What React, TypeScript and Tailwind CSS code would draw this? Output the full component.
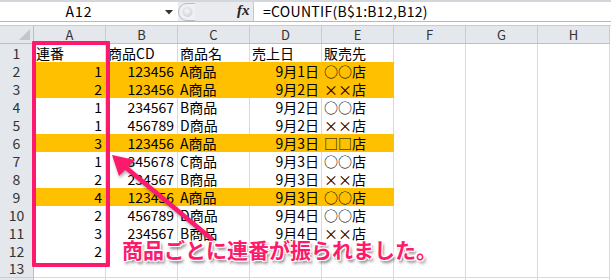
import React from "react";

type Row = { cells: string[]; hl: boolean; label: string };

const rows: Row[] = [
  { cells: ["連番", "商品CD", "商品名", "売上日", "販売先"], hl: false, label: "1" },
  { cells: ["1", "123456", "A商品", "9月1日", "○○店"], hl: true, label: "2" },
  { cells: ["2", "123456", "A商品", "9月2日", "××店"], hl: true, label: "3" },
  { cells: ["1", "234567", "B商品", "9月2日", "○○店"], hl: false, label: "4" },
  { cells: ["1", "456789", "D商品", "9月2日", "××店"], hl: false, label: "5" },
  { cells: ["3", "123456", "A商品", "9月3日", "□□店"], hl: true, label: "6" },
  { cells: ["1", "345678", "C商品", "9月3日", "○○店"], hl: false, label: "7" },
  { cells: ["2", "234567", "B商品", "9月3日", "××店"], hl: false, label: "8" },
  { cells: ["4", "123456", "A商品", "9月3日", "○○店"], hl: true, label: "9" },
  { cells: ["2", "456789", "D商品", "9月4日", "○○店"], hl: false, label: "10" },
  { cells: ["3", "234567", "B商品", "9月4日", "××店"], hl: false, label: "11" },
  { cells: ["2", "", "", "", ""], hl: false, label: "12" },
  { cells: ["", "", "", "", ""], hl: false, label: "13" },
  { cells: ["", "", "", "", ""], hl: false, label: "" },
];

const cols = ["A", "B", "C", "D", "E", "F", "G", "H"];

function cellAlign(rowIdx: number, colIdx: number): string {
  if (rowIdx === 0) return "justify-start pl-[2px]";
  if (colIdx === 0 || colIdx === 1) return "justify-end pr-[3px]";
  if (colIdx === 3) return "justify-end pr-[2px]";
  return "justify-start pl-[2px]";
}

export default function App() {
  return (
    <div className="relative w-[611px] h-[280px] overflow-hidden bg-white font-['Noto_Sans_CJK_JP',sans-serif] text-[14px] text-black">
      {/* Formula bar */}
      <div className="h-[26px] flex flex-col bg-white">
        <div className="h-[2px] bg-[#d3d6db]" />
        <div className="h-[19px] flex">
          <div className="relative w-[178px] bg-white flex items-center">
            <span className="w-[158px] text-center text-[14px] leading-[19px] tracking-[1px]">A12</span>
            <svg className="absolute left-[165px] top-[8px]" width="8" height="5" viewBox="0 0 8 5">
              <polygon points="0,0 8,0 4,4.5" fill="#333" />
            </svg>
          </div>
          <div className="relative w-[76px] bg-[#e9ebee] border-r border-[#c4c8ce]">
            <svg className="absolute left-0 top-[1px]" width="18" height="18" viewBox="0 0 18 18">
              <defs>
                <radialGradient id="pillg" cx="0.45" cy="0.4" r="0.6">
                  <stop offset="0" stopColor="#f6f7f9" />
                  <stop offset="1" stopColor="#cfd3d8" />
                </radialGradient>
              </defs>
              <path d="M17,0.5 L9,0.5 A8.5,8.5 0 0 0 9,17.5 L17,17.5" fill="#eef0f2" stroke="#b8bcc3" strokeWidth="1" />
              <circle cx="9.5" cy="9" r="5" fill="url(#pillg)" />
            </svg>
            <span className="absolute left-[59px] top-[-1px] font-['Liberation_Serif',serif] italic font-bold text-[15px] leading-[19px] text-[#222]">
              fx
            </span>
          </div>
          <div className="flex-1 bg-white flex items-center pl-[9px] text-[14px] leading-[19px] tracking-[0.3px]">
            =COUNTIF(B$1:B12,B12)
          </div>
        </div>
        <div className="h-[1px] bg-[#b4b9c1]" />
        <div className="h-[3px] bg-white" />
        <div className="h-[1px] bg-[#c8ccd2]" />
      </div>

      {/* Column header row */}
      <div className="grid grid-cols-[34px_repeat(8,72px)] h-[18px]">
        <div className="relative bg-[#e4e7eb] border-r border-b border-[#b9bfc7]">
          <svg className="absolute right-[3px] bottom-[3px]" width="11" height="11" viewBox="0 0 11 11">
            <polygon points="11,0 11,11 0,11" fill="#c3c7cd" />
          </svg>
        </div>
        {cols.map((c) => (
          <div
            key={c}
            className="bg-[#e4e7eb] border-r border-b border-r-[#c9cdd3] border-b-[#b9bfc7] flex items-center justify-center text-[13px] leading-[17px] text-[#333]"
          >
            {c}
          </div>
        ))}
      </div>

      {/* Rows */}
      {rows.map((r, ri) => (
        <div key={ri} className="grid grid-cols-[34px_repeat(8,72px)] h-[18px]">
          <div className="bg-[#e4e7eb] border-r border-b border-r-[#b9bfc7] border-b-[#c9cdd3] flex items-center justify-center text-[14px] leading-[17px] text-[#333]">
            {r.label}
          </div>
          {cols.map((c, ci) => {
            const text = ci < 5 ? r.cells[ci] : "";
            const filled = r.hl && ci < 5;
            return (
              <div
                key={c}
                className={
                  "flex items-center whitespace-nowrap overflow-visible leading-[18px] border-r border-b " +
                  (filled ? "bg-[#ffc000] border-[#ffc000] " : "bg-white border-[#dadada] ") +
                  cellAlign(ri, ci)
                }
              >
                {text}
              </div>
            );
          })}
        </div>
      ))}

      {/* Pink highlight box */}
      <div className="absolute left-[32px] top-[41px] w-[78px] h-[226px] border-[4px] border-[#fd1a6c] rounded-[1px]" />

      {/* Arrow */}
      <svg
        className="absolute left-0 top-0 drop-shadow-[1px_2px_1.5px_rgba(0,0,0,0.35)]"
        width="611"
        height="280"
        viewBox="0 0 611 280"
      >
        <line x1="124" y1="166" x2="213" y2="240" stroke="#fd1a6c" strokeWidth="4.5" />
        <polygon points="112,155 119,176 135,160" fill="#fd1a6c" />
      </svg>

      {/* Callout */}
      <div className="absolute left-[122px] top-[238px] whitespace-nowrap font-bold text-[21px] leading-[23px] text-[#fd1a6c] [text-shadow:-1px_-1px_0_#fff,1px_-1px_0_#fff,-1px_1px_0_#fff,1px_1px_0_#fff,0_0_2px_#fff,2px_3px_3px_rgba(0,0,0,0.5)]">
        商品ごとに連番が振られました。
      </div>
    </div>
  );
}
